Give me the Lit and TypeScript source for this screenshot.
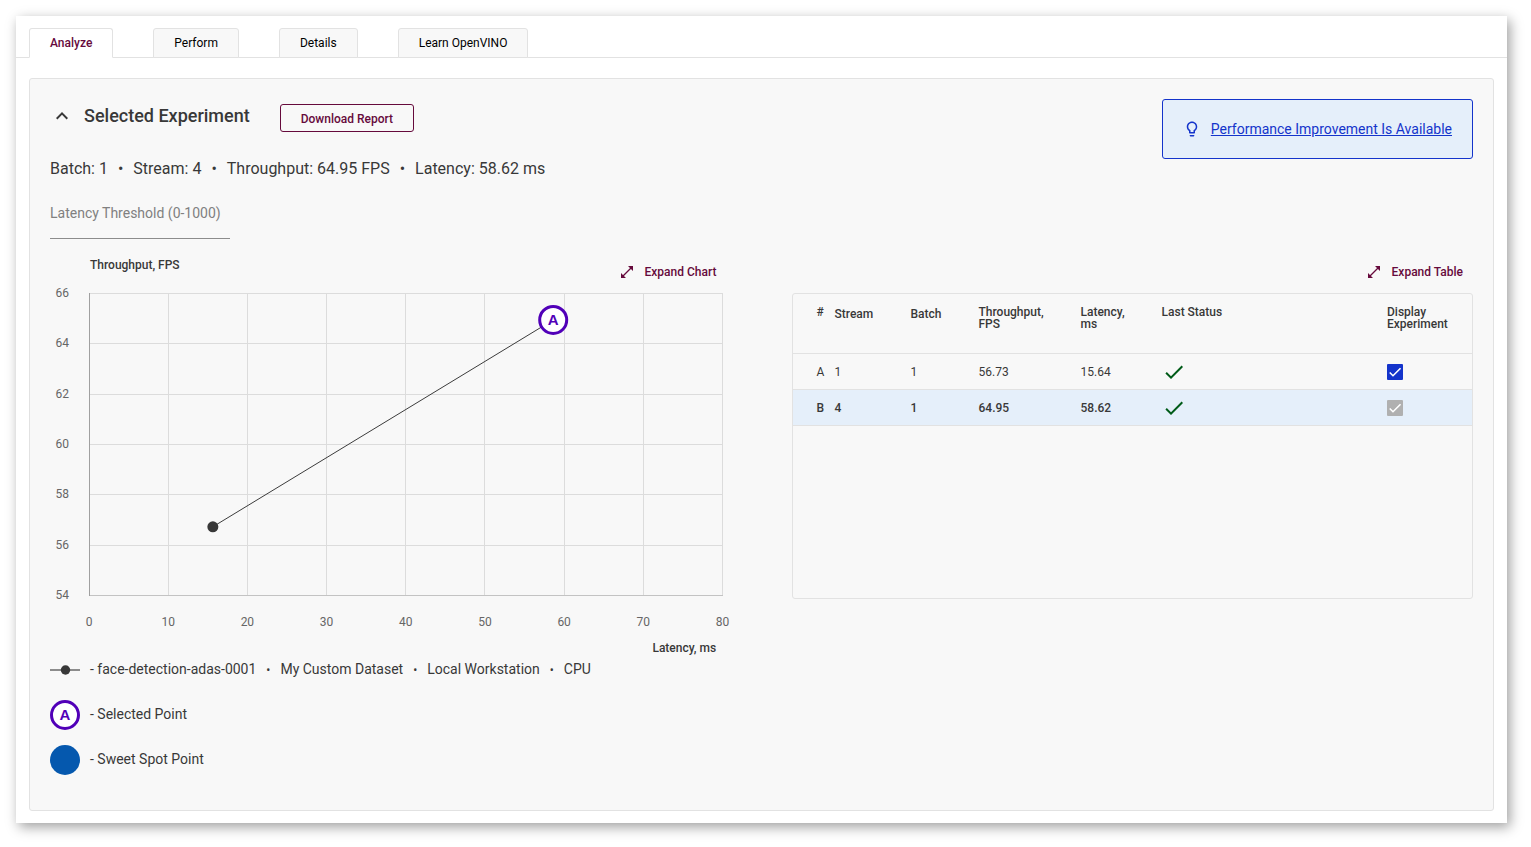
import { LitElement, html, css, svg } from "lit";
import { customElement, state } from "lit/decorators.js";

interface Experiment {
  id: string;
  stream: number;
  batch: number;
  throughput: number;
  latency: number;
  selected: boolean;
}

const EXPERIMENTS: Experiment[] = [
  { id: "A", stream: 1, batch: 1, throughput: 56.73, latency: 15.64, selected: false },
  { id: "B", stream: 4, batch: 1, throughput: 64.95, latency: 58.62, selected: true },
];

const TABS = ["Analyze", "Perform", "Details", "Learn OpenVINO"];

const expandIcon = html`<svg class="expand-icon" viewBox="0 0 12 12" aria-hidden="true">
  <path d="M2 10L10 2" stroke="currentColor" stroke-width="1.3" />
  <path d="M12 0v5L7 0zM0 12V7l5 5z" fill="currentColor" />
</svg>`;

@customElement("throughput-chart")
export class ThroughputChart extends LitElement {
  static styles = css`
    :host {
      display: block;
      padding: 0 9px 59px 39px;
    }
    .plot {
      display: block;
      width: 100%;
      height: 303px;
      overflow: visible;
      font: 400 12px Roboto, sans-serif;
    }
    .grid {
      stroke: #dcdcdc;
      shape-rendering: crispEdges;
    }
    .axis {
      stroke: #a0a0a0;
      shape-rendering: crispEdges;
    }
    .base {
      stroke: #c3c3c3;
      shape-rendering: crispEdges;
    }
    .tick {
      fill: #666;
    }
    .series {
      stroke: #3c3c3c;
      stroke-width: 1;
    }
    .dot {
      fill: #383838;
    }
    .ring {
      fill: #fff;
      stroke: #5100b8;
      stroke-width: 3;
    }
    .letter {
      fill: #5100b8;
      font: 700 15px "Liberation Sans", Arial, sans-serif;
      text-anchor: middle;
    }
    .name {
      fill: #383838;
      font-weight: 500;
      text-anchor: end;
    }
    .x {
      text-anchor: middle;
    }
    .y {
      text-anchor: end;
    }
  `;

  private px(latency: number) {
    return `${(latency / 80) * 100}%`;
  }

  private py(throughput: number) {
    return ((66 - throughput) / 12) * 302 + 0.5;
  }

  render() {
    const xs = [0, 10, 20, 30, 40, 50, 60, 70, 80];
    const ys = [66, 64, 62, 60, 58, 56, 54];
    const [a, b] = EXPERIMENTS;
    return html`<svg class="plot" role="img" aria-label="Throughput against latency">
      ${xs.slice(1).map(
        (x) => svg`<line class="grid" x1=${this.px(x)} x2=${this.px(x)} y1="0" y2="303" />`
      )}
      ${ys.slice(0, -1).map(
        (y) => svg`<line class="grid" x1="0" x2="100%" y1=${this.py(y)} y2=${this.py(y)} />`
      )}
      <line class="base" x1="0" x2="100%" y1="302.5" y2="302.5" />
      <line class="axis" x1="0.5" x2="0.5" y1="0" y2="303" />
      ${ys.map((y) => svg`<text class="tick y" x="-20" y=${Math.floor(this.py(y)) + 4}>${y}</text>`)}
      ${xs.map((x) => svg`<text class="tick x" x=${this.px(x)} y="333">${x}</text>`)}
      <text class="name" x="99%" y="359">Latency, ms</text>
      <line
        class="series"
        x1=${this.px(a.latency)}
        y1=${this.py(a.throughput)}
        x2=${this.px(b.latency)}
        y2=${this.py(b.throughput)}
      />
      <circle class="dot" cx=${this.px(a.latency)} cy=${this.py(a.throughput)} r="5.5" />
      <circle class="ring" cx=${this.px(b.latency)} cy=${this.py(b.throughput)} r="13.5" />
      <text class="letter" x=${this.px(b.latency)} y=${this.py(b.throughput) + 5}>A</text>
    </svg>`;
  }
}

@customElement("experiment-table")
export class ExperimentTable extends LitElement {
  static styles = css`
    :host {
      display: block;
      box-sizing: border-box;
      min-height: 306px;
      border: 1px solid #e2e2e2;
      border-radius: 3px;
    }
    .table {
      width: 100%;
      table-layout: fixed;
      border-collapse: collapse;
      font-size: 12px;
      color: #383838;
    }
    .c-id {
      width: 42px;
    }
    .c-stream {
      width: 76px;
    }
    .c-batch {
      width: 68px;
    }
    .c-thr {
      width: 102px;
    }
    .c-lat {
      width: 81px;
    }
    .c-show {
      width: 85px;
    }
    th,
    td {
      padding: 0;
      text-align: left;
      border-bottom: 1px solid #e2e2e2;
    }
    th {
      height: 47px;
      padding-top: 12px;
      vertical-align: top;
      font-weight: 500;
      line-height: 12px;
    }
    .sortable {
      line-height: 16px;
    }
    td {
      height: 35px;
      vertical-align: middle;
    }
    .id {
      padding-left: 24px;
    }
    .selected {
      background: #e5effa;
      font-weight: 500;
    }
    .done {
      display: block;
      width: 24px;
      height: 24px;
      fill: #005b18;
    }
    .check {
      display: grid;
      width: 16px;
      height: 16px;
    }
    .box,
    .tick {
      grid-area: 1 / 1;
      width: 16px;
      height: 16px;
      margin: 0;
    }
    .box {
      appearance: none;
      border: 2px solid #1434cb;
      border-radius: 1px;
    }
    .box:checked {
      background: #1434cb;
    }
    .box:disabled {
      background: #b0b0b0;
      border-color: #b0b0b0;
    }
    .tick {
      pointer-events: none;
      fill: none;
      stroke: #fff;
      stroke-width: 2.4;
      z-index: 1;
    }
    .box:not(:checked) + .tick {
      display: none;
    }
  `;

  render() {
    return html`<table class="table">
      <colgroup>
        <col class="c-id" />
        <col class="c-stream" />
        <col class="c-batch" />
        <col class="c-thr" />
        <col class="c-lat" />
        <col />
        <col class="c-show" />
      </colgroup>
      <thead>
        <tr>
          <th class="id">#</th>
          <th class="sortable">Stream</th>
          <th class="sortable">Batch</th>
          <th>Throughput,<br />FPS</th>
          <th>Latency,<br />ms</th>
          <th>Last Status</th>
          <th>Display<br />Experiment</th>
        </tr>
      </thead>
      <tbody>
        ${EXPERIMENTS.map(
          (e) => html`<tr class=${e.selected ? "selected" : ""}>
            <td class="id">${e.id}</td>
            <td>${e.stream}</td>
            <td>${e.batch}</td>
            <td>${e.throughput}</td>
            <td>${e.latency}</td>
            <td>
              <svg class="done" viewBox="0 0 24 24" role="img" aria-label="Done">
                <path d="M9 16.2L4.8 12l-1.4 1.4L9 19 21 7l-1.4-1.4L9 16.2z" />
              </svg>
            </td>
            <td>
              <label class="check">
                <input
                  class="box"
                  type="checkbox"
                  aria-label="Display experiment ${e.id}"
                  checked
                  ?disabled=${e.selected}
                />
                <svg class="tick" viewBox="0 0 24 24" aria-hidden="true">
                  <path d="M4.1 12.7L9 17.6 20.3 6.3" />
                </svg>
              </label>
            </td>
          </tr>`
        )}
      </tbody>
    </table>`;
  }
}

@customElement("app-root")
export class AppRoot extends LitElement {
  static styles = css`
    :host {
      display: block;
      padding: 16px 24px 24px 16px;
      font-family: Roboto, sans-serif;
      color: #383838;
      background: #fff;
    }
    * {
      box-sizing: border-box;
    }
    button {
      font: 500 12px Roboto, sans-serif;
      cursor: pointer;
    }
    .card {
      padding: 12px 0 12px;
      background: #fff;
      box-shadow: 3px 4px 12px rgba(0, 0, 0, 0.38);
    }
    .tabs {
      display: flex;
      gap: 40px;
      padding: 0 13px;
      border-bottom: 1px solid #e2e2e2;
    }
    .tab {
      height: 30px;
      margin-bottom: -1px;
      padding: 0 20px;
      border: 1px solid #e2e2e2;
      border-radius: 3px 3px 0 0;
      background: #f8f8f8;
      color: #000;
      font-weight: 400;
    }
    .tab.active {
      border-bottom-color: #fff;
      background: #fff;
      color: #660a3c;
      font-weight: 500;
    }
    .panel {
      margin: 20px 13px 0;
      padding: 20px 20px 35px;
      border: 1px solid #e2e2e2;
      border-radius: 3px;
      background: #f8f8f8;
    }
    .head {
      display: flex;
      justify-content: space-between;
      align-items: flex-start;
    }
    .title-row {
      display: flex;
      align-items: flex-end;
      height: 33px;
    }
    .toggle {
      display: flex;
      align-items: center;
      gap: 10px;
      height: 33px;
      padding: 0;
      border: 0;
      background: none;
      color: #383838;
      font-size: 18px;
    }
    .chevron {
      width: 24px;
      height: 24px;
      fill: currentColor;
    }
    .title {
      margin: 0;
      font-size: 18px;
      font-weight: 500;
    }
    .download {
      height: 28px;
      margin-left: 30px;
      padding: 1px 20px 0;
      border: 1px solid #660a3c;
      border-radius: 3px;
      background: none;
      color: #660a3c;
    }
    .summary {
      display: flex;
      gap: 10px;
      margin-top: 27px;
      font-size: 16px;
      line-height: 20px;
    }
    .notice {
      display: flex;
      align-items: center;
      gap: 10px;
      height: 60px;
      padding: 0 20px;
      border: 1px solid #1434cb;
      border-radius: 3px;
      background: #e5effa;
      color: #1434cb;
      font-size: 14px;
    }
    .notice a {
      color: inherit;
    }
    .bulb {
      width: 18px;
      height: 18px;
      fill: currentColor;
    }
    .field {
      display: grid;
      width: 180px;
      margin-top: 26px;
      font-size: 14px;
      line-height: 16px;
      color: #808080;
    }
    .field-input {
      width: 100%;
      height: 18px;
      padding: 0;
      border: 0;
      border-bottom: 1px solid #8c8c8c;
      background: none;
      font: 14px Roboto, sans-serif;
      color: #383838;
      outline: none;
    }
    .columns {
      display: grid;
      grid-template-columns: minmax(0, 1fr) minmax(0, 1fr);
      gap: 60px;
      margin-top: 18px;
    }
    .bar {
      display: flex;
      justify-content: flex-end;
      height: 36px;
      padding: 6px 10px 0 0;
    }
    .chart-bar {
      justify-content: space-between;
      padding: 6px 15px 0 40px;
    }
    .y-name {
      font-size: 12px;
      line-height: 16px;
      font-weight: 500;
      margin-top: -6px;
    }
    .expand {
      display: flex;
      align-items: center;
      gap: 12px;
      height: 18px;
      padding: 0;
      border: 0;
      background: none;
      color: #660a3c;
    }
    .expand-icon {
      width: 12px;
      height: 12px;
    }
    .legend {
      display: grid;
      gap: 15px;
      margin: 0;
      padding: 0;
      list-style: none;
      font-size: 14px;
      line-height: 28px;
    }
    .legend-item {
      display: flex;
      gap: 10px;
      height: 30px;
    }
    .mark {
      width: 30px;
      height: 30px;
      flex: none;
    }
    .mark-letter {
      fill: #5100b8;
      font: 700 15px "Liberation Sans", Arial, sans-serif;
      text-anchor: middle;
    }
    .dataset {
      white-space: nowrap;
    }
    .sep {
      margin: 0 10px;
      font-size: 12px;
    }
  `;

  @state() private active = TABS[0];

  render() {
    const sep = html`<span class="sep">•</span>`;
    return html`<main class="card">
      <nav class="tabs" role="tablist">
        ${TABS.map(
          (t) => html`<button
            class="tab ${t === this.active ? "active" : ""}"
            role="tab"
            aria-selected=${t === this.active}
            @click=${() => (this.active = t)}
          >${t}</button>`
        )}
      </nav>
      <section class="panel">
        <header class="head">
          <div>
            <div class="title-row">
              <button class="toggle" aria-expanded="true">
                <svg class="chevron" viewBox="0 0 24 24" aria-hidden="true">
                  <path d="M12 8l-6 6 1.41 1.41L12 10.83l4.59 4.58L18 14z" />
                </svg>
                <span class="title">Selected Experiment</span>
              </button>
              <button class="download">Download Report</button>
            </div>
            <div class="summary">
              <span>Batch: 1</span><span>•</span><span>Stream: 4</span><span>•</span
              ><span>Throughput: 64.95 FPS</span><span>•</span><span>Latency: 58.62 ms</span>
            </div>
          </div>
          <div class="notice">
            <svg class="bulb" viewBox="0 0 24 24" aria-hidden="true">
              <path
                d="M9 21c0 .55.45 1 1 1h4c.55 0 1-.45 1-1v-1H9v1zm3-19C8.14 2 5 5.14 5 9c0 2.38 1.19 4.47 3 5.74V17c0 .55.45 1 1 1h6c.55 0 1-.45 1-1v-2.26c1.81-1.27 3-3.36 3-5.74 0-3.86-3.14-7-7-7zm2.85 11.1l-.85.6V16h-4v-2.3l-.85-.6A4.997 4.997 0 017 9c0-2.76 2.24-5 5-5s5 2.24 5 5c0 1.63-.8 3.16-2.15 4.1z"
              />
            </svg>
            <a href="#performance">Performance Improvement Is Available</a>
          </div>
        </header>
        <div class="field">
          <label for="threshold">Latency Threshold (0-1000)</label>
          <input class="field-input" id="threshold" type="text" inputmode="numeric" />
        </div>
        <div class="columns">
          <div>
            <div class="bar chart-bar">
              <span class="y-name">Throughput, FPS</span>
              <button class="expand">${expandIcon}Expand Chart</button>
            </div>
            <throughput-chart></throughput-chart>
            <ul class="legend">
              <li class="legend-item">
                <svg class="mark" viewBox="0 0 30 30" aria-hidden="true">
                  <path d="M0 15h30" stroke="#8c8c8c" stroke-width="2" />
                  <circle cx="15.5" cy="15" r="4.7" fill="#383838" />
                </svg>
                <span class="dataset"
                  >- face-detection-adas-0001${sep}My Custom Dataset${sep}Local
                  Workstation${sep}CPU</span
                >
              </li>
              <li class="legend-item">
                <svg class="mark" viewBox="0 0 30 30" aria-hidden="true">
                  <circle cx="15" cy="15" r="13.5" fill="#fff" stroke="#5100b8" stroke-width="3" />
                  <text class="mark-letter" x="15" y="20">A</text>
                </svg>
                <span>- Selected Point</span>
              </li>
              <li class="legend-item">
                <svg class="mark" viewBox="0 0 30 30" aria-hidden="true">
                  <circle cx="15" cy="15" r="15" fill="#0558ae" />
                </svg>
                <span>- Sweet Spot Point</span>
              </li>
            </ul>
          </div>
          <div>
            <div class="bar">
              <button class="expand">${expandIcon}Expand Table</button>
            </div>
            <experiment-table></experiment-table>
          </div>
        </div>
      </section>
    </main>`;
  }
}
